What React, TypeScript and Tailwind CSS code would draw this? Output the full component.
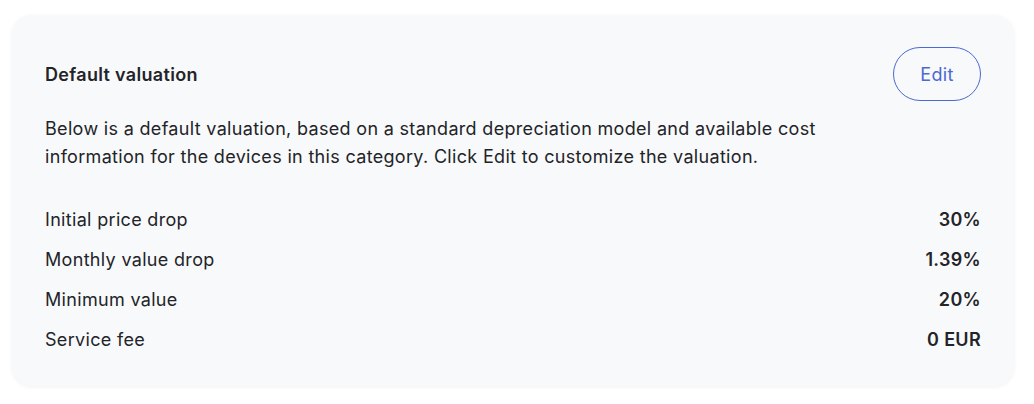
import React from 'react';

const rows = [
  { label: 'Initial price drop', value: '30%' },
  { label: 'Monthly value drop', value: '1.39%' },
  { label: 'Minimum value', value: '20%' },
  { label: 'Service fee', value: '0 EUR' },
];

export default function App() {
  return (
    <div className="min-h-screen bg-white pt-[15px] px-3 font-['Inter',sans-serif] text-[#232428] tracking-[0.02em]">
      <div className="w-[1002px] rounded-[20px] bg-[#f8f9fb] px-[33px] pt-[32px] pb-[26px] shadow-[0_1px_4px_rgba(0,0,0,0.06)]">
        <div className="flex items-center justify-between">
          <h2 className="text-[18px] font-semibold">Default valuation</h2>
          <button className="h-[54px] w-[88px] rounded-full border border-[#4a69d2] text-[18px] text-[#4a69d2]">
            Edit
          </button>
        </div>
        <p className="mt-[14px] max-w-[800px] text-[18px] leading-7">
          Below is a default valuation, based on a standard depreciation model and available cost information for the devices in this category. Click Edit to customize the valuation.
        </p>
        <div className="mt-[29px] text-[18px]">
          {rows.map((row) => (
            <div key={row.label} className="flex items-center justify-between py-2 leading-6">
              <span>{row.label}</span>
              <span className="font-semibold">{row.value}</span>
            </div>
          ))}
        </div>
      </div>
    </div>
  );
}
